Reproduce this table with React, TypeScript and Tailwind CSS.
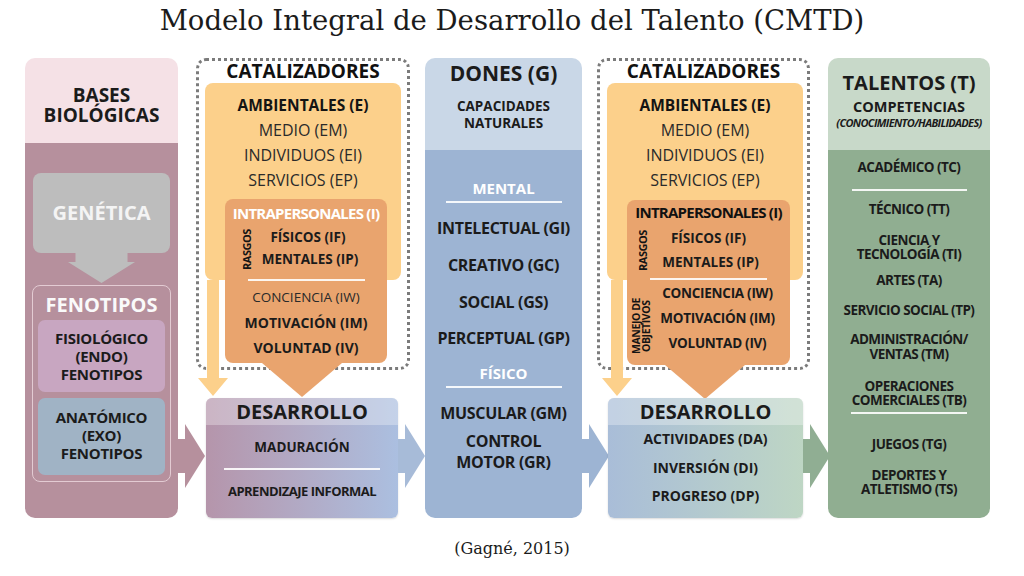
import type { ReactNode } from "react";

// Arrow pointing right, drawn from the edge of one column into the next one.
function SideArrow({ fill, className }: { fill: string; className: string }) {
  return (
    <svg width="27" height="64" viewBox="0 0 27 64" className={className} aria-hidden>
      <polygon points="0,15 7,15 7,0 27,32 7,64 7,49 0,49" fill={fill} />
    </svg>
  );
}

// Thin yellow arrow that leaves the "ambientales" block and drops into DESARROLLO.
function ThinDownArrow({ className }: { className: string }) {
  return (
    <svg width="30" height="116" viewBox="0 0 30 116" className={className} aria-hidden>
      <polygon points="9,0 21,0 21,98 30,98 15,116 0,98 9,98" fill="#fcd08b" />
    </svg>
  );
}

function WideDownHead({ className }: { className: string }) {
  return (
    <svg width="80" height="34" viewBox="0 0 80 34" className={className} aria-hidden>
      <polygon points="0,0 80,0 40,34" fill="#e9a46e" />
    </svg>
  );
}

function Rule({ className }: { className: string }) {
  return <div className={`h-[2px] bg-white/90 ${className}`} />;
}

function SideLabel({ children, className }: { children: ReactNode; className: string }) {
  return (
    <span
      className={`absolute [writing-mode:vertical-rl] rotate-180 text-center font-bold tracking-[-0.04em] text-[#141414] ${className}`}
    >
      {children}
    </span>
  );
}

function Ambientales() {
  return (
    <div className="mt-[2px] h-[197px] w-[196px] rounded-[8px] bg-[#fcd08b] pt-[10px] text-center leading-[25px] text-[#2a2a2a]">
      <div className="text-[15.5px] font-bold text-[#141414]">AMBIENTALES (E)</div>
      <div className="text-[16px]">MEDIO (EM)</div>
      <div className="text-[16px]">INDIVIDUOS (EI)</div>
      <div className="text-[16px]">SERVICIOS (EP)</div>
    </div>
  );
}

function BasesBiologicas() {
  return (
    <div className="relative flex h-[460px] w-[153px] flex-col">
      <div className="h-[85px] rounded-t-[10px] bg-[#f5e1e6] pt-[27px] text-center text-[19px] font-bold leading-[20px] text-[#1b1b1b]">
        BASES
        <br />
        BIOLÓGICAS
      </div>
      <div className="flex-1 rounded-b-[10px] bg-[#b6909d] px-[8px] pt-[30px]">
        <div className="flex h-[80px] items-center justify-center rounded-[8px] bg-[#bdbdbd] text-[20px] font-bold text-[#f4f4f4]">
          GENÉTICA
        </div>
        <svg width="67" height="30" viewBox="0 0 67 30" className="mx-auto block" aria-hidden>
          <polygon points="7.5,0 59.5,0 59.5,9 67,9 33.5,30 0,9 7.5,9" fill="#bdbdbd" />
        </svg>
        <div className="-mx-px mt-[2px] h-[197px] rounded-[8px] border border-[#e3cbd3] px-[5px]">
          <div className="pt-[8px] text-center text-[20px] font-bold leading-[22px] text-[#fafafa]">FENOTIPOS</div>
          <div className="mt-[4px] flex h-[72px] flex-col items-center justify-center rounded-[7px] bg-[#c8a6c1] text-[15px] font-bold leading-[18px] tracking-[-0.02em] text-[#1b1b1b]">
            <span>FISIOLÓGICO</span>
            <span>(ENDO)</span>
            <span>FENOTIPOS</span>
          </div>
          <div className="mt-[6px] flex h-[77px] flex-col items-center justify-center rounded-[7px] bg-[#a0b3c5] pb-[4px] text-[15px] font-bold leading-[18px] tracking-[-0.02em] text-[#1b1b1b]">
            <span>ANATÓMICO</span>
            <span>(EXO)</span>
            <span>FENOTIPOS</span>
          </div>
        </div>
      </div>
      <SideArrow fill="#b6909d" className="absolute left-full top-[366px]" />
    </div>
  );
}

function CatalizadoresIzq() {
  return (
    <div className="relative w-[214px]">
      <div className="h-[312px] rounded-[10px] border-[3px] border-dotted border-[#7b7b7b] px-[6px]">
        <div className="text-center text-[19px] font-bold leading-[20px] text-[#111]">CATALIZADORES</div>
        <Ambientales />
        <div className="relative mt-[-81px] ml-[20px] h-[164px] w-[162px] rounded-[8px] bg-[#e9a46e] pt-[4px] text-center text-[#1b1b1b]">
          <div className="text-[15px] font-bold leading-[20px] tracking-[-0.05em] text-white">INTRAPERSONALES (I)</div>
          <div className="relative mt-[3px] text-[13.5px] font-bold leading-[22px]">
            <SideLabel className="left-[16px] top-[3px] text-[11px] leading-[11px]">RASGOS</SideLabel>
            <div className="pl-[4px]">FÍSICOS (IF)</div>
            <div className="pl-[8px]">MENTALES (IP)</div>
          </div>
          <Rule className="mx-auto mt-[9px] w-[117px]" />
          <div className="mt-[4px] leading-[25px]">
            <div className="text-[13.5px] text-[#2a2a2a]">CONCIENCIA (IW)</div>
            <div className="text-[14px] font-bold">MOTIVACIÓN (IM)</div>
            <div className="text-[14px] font-bold">VOLUNTAD (IV)</div>
          </div>
          <WideDownHead className="absolute left-[37px] top-full" />
        </div>
      </div>
      <ThinDownArrow className="absolute left-[2px] top-[222px]" />
      <div className="relative ml-[10px] mt-[28px] h-[120px] w-[192px] rounded-[6px] bg-linear-to-r from-[#b595ab] to-[#abbfe0] text-center text-[#1b1b1b] shadow-[0_1px_2px_rgba(0,0,0,0.15)]">
        <div className="h-[27px] rounded-t-[6px] bg-white/30 text-[20px] font-bold leading-[27px]">DESARROLLO</div>
        <div className="mt-[13px] text-[13.5px] font-bold leading-[18px]">MADURACIÓN</div>
        <Rule className="mx-auto mt-[12px] w-[156px]" />
        <div className="mt-[12px] text-[13px] font-bold leading-[18px] tracking-[-0.04em]">APRENDIZAJE INFORMAL</div>
        <SideArrow fill="#a7bbd8" className="absolute left-full top-[26px]" />
      </div>
    </div>
  );
}

function Dones() {
  const item = "text-[16px] font-bold leading-[24px] tracking-[-0.02em]";
  return (
    <div className="relative flex h-[460px] w-[157px] flex-col text-center text-[#1b1b1b]">
      <div className="h-[92px] rounded-t-[10px] bg-[#c9d7e7] pt-[3px]">
        <div className="text-[21px] font-bold leading-[24px]">DONES (G)</div>
        <div className="mt-[13px] text-[13.5px] font-bold leading-[17px]">
          CAPACIDADES
          <br />
          NATURALES
        </div>
      </div>
      <div className="flex-1 rounded-b-[10px] bg-[#9db4d3] pt-[28px]">
        <div className="text-[15px] font-bold leading-[20px] text-white">MENTAL</div>
        <Rule className="mx-auto mt-[3px] w-[116px]" />
        <div className={`mt-[13px] ${item}`}>INTELECTUAL (GI)</div>
        <div className={`mt-[13px] ${item}`}>CREATIVO (GC)</div>
        <div className={`mt-[13px] ${item}`}>SOCIAL (GS)</div>
        <div className={`mt-[12px] ${item}`}>PERCEPTUAL (GP)</div>
        <div className="mt-[13px] text-[15px] font-bold leading-[20px] text-white">FÍSICO</div>
        <Rule className="mx-auto mt-[3px] w-[116px]" />
        <div className={`mt-[13px] ${item}`}>MUSCULAR (GM)</div>
        <div className="mt-[6px] text-[16px] font-bold leading-[21px] tracking-[-0.02em]">
          CONTROL
          <br />
          MOTOR (GR)
        </div>
      </div>
      <SideArrow fill="#9db4d3" className="absolute left-full top-[366px]" />
    </div>
  );
}

function CatalizadoresDer() {
  return (
    <div className="relative w-[213px]">
      <div className="h-[312px] rounded-[10px] border-[3px] border-dotted border-[#7b7b7b] px-[7px]">
        <div className="text-center text-[19px] font-bold leading-[20px] text-[#111]">CATALIZADORES</div>
        <Ambientales />
        <div className="relative mt-[-80px] ml-[20px] h-[165px] w-[163px] rounded-[8px] bg-[#e9a46e] pt-[2px] text-center text-[#1b1b1b]">
          <div className="text-[15px] font-bold leading-[20px] tracking-[-0.05em] text-[#111]">INTRAPERSONALES (I)</div>
          <div className="relative mt-[4px] text-[13.5px] font-bold leading-[24px]">
            <SideLabel className="left-[10px] top-[4px] text-[11px] leading-[11px]">RASGOS</SideLabel>
            <div>FÍSICOS (IF)</div>
            <div className="pl-[4px]">MENTALES (IP)</div>
          </div>
          <Rule className="mx-auto mt-[4px] w-[117px]" />
          <div className="relative mt-[1px] pl-[18px] text-[13.5px] font-bold leading-[25px] tracking-[-0.02em]">
            <SideLabel className="left-[5px] top-[15px] text-[10.5px] leading-[9.5px]">MANEJO DE OBJETIVOS</SideLabel>
            <div>CONCIENCIA (IW)</div>
            <div>MOTIVACIÓN (IM)</div>
            <div>VOLUNTAD (IV)</div>
          </div>
          <WideDownHead className="absolute left-[38px] top-full" />
        </div>
      </div>
      <ThinDownArrow className="absolute left-[5px] top-[222px]" />
      <div className="relative ml-[11px] mt-[28px] h-[120px] w-[195px] rounded-[6px] bg-linear-to-r from-[#a9bdd8] to-[#bed6c4] text-center text-[#1b1b1b] shadow-[0_1px_2px_rgba(0,0,0,0.15)]">
        <div className="h-[27px] rounded-t-[6px] bg-white/30 text-[20px] font-bold leading-[27px]">DESARROLLO</div>
        <div className="mt-[3px] text-[14px] font-bold leading-[22px]">ACTIVIDADES (DA)</div>
        <div className="mt-[7px] text-[14px] font-bold leading-[22px]">INVERSIÓN (DI)</div>
        <div className="mt-[6px] text-[14px] font-bold leading-[22px]">PROGRESO (DP)</div>
        <SideArrow fill="#90ae93" className="absolute left-full top-[26px]" />
      </div>
    </div>
  );
}

function Talentos() {
  const item = "text-[13.5px] font-bold leading-[18px] tracking-[-0.04em]";
  const pair = "text-[13.5px] font-bold leading-[14px] tracking-[-0.04em]";
  return (
    <div className="flex h-[460px] w-[162px] flex-col text-center text-[#1b1b1b]">
      <div className="h-[92px] rounded-t-[10px] bg-[#c8d9c9] pt-[13px]">
        <div className="text-[20px] font-bold leading-[24px]">TALENTOS (T)</div>
        <div className="mt-[4px] text-[14.5px] font-bold leading-[16px]">COMPETENCIAS</div>
        <div className="mt-[2px] text-[11px] font-bold italic leading-[12px] tracking-[-0.06em]">(CONOCIMIENTO/HABILIDADES)</div>
      </div>
      <div className="flex-1 rounded-b-[10px] bg-[#90ae91] pt-[8px]">
        <div className={item}>ACADÉMICO (TC)</div>
        <Rule className="mx-auto mt-[13px] w-[115px]" />
        <div className={`mt-[9px] ${item}`}>TÉCNICO (TT)</div>
        <div className={`mt-[15px] ${pair}`}>
          CIENCIA Y
          <br />
          TECNOLOGÍA (TI)
        </div>
        <div className={`mt-[10px] ${item}`}>ARTES (TA)</div>
        <div className={`mt-[12px] ${item}`}>SERVICIO SOCIAL (TP)</div>
        <div className={`mt-[13px] ${pair} leading-[15px]`}>
          ADMINISTRACIÓN/
          <br />
          VENTAS (TM)
        </div>
        <div className={`mt-[17px] ${pair}`}>
          OPERACIONES
          <br />
          COMERCIALES (TB)
        </div>
        <Rule className="mx-auto mt-[5px] w-[116px]" />
        <div className={`mt-[21px] ${item}`}>JUEGOS (TG)</div>
        <div className={`mt-[15px] ${pair}`}>
          DEPORTES Y
          <br />
          ATLETISMO (TS)
        </div>
      </div>
    </div>
  );
}

export default function App() {
  return (
    <div className="h-[576px] w-[1024px] overflow-hidden bg-white font-['Open_Sans',sans-serif]">
      <h1 className="h-[58px] pt-[3px] text-center font-['DejaVu_Serif',serif] text-[27.5px] font-normal leading-[34px] text-[#1b1b1b]">
        Modelo Integral de Desarrollo del Talento (CMTD)
      </h1>
      <div className="flex items-start pl-[25px]">
        <BasesBiologicas />
        <div className="ml-[18px]">
          <CatalizadoresIzq />
        </div>
        <div className="ml-[15px]">
          <Dones />
        </div>
        <div className="ml-[15px]">
          <CatalizadoresDer />
        </div>
        <div className="ml-[18px]">
          <Talentos />
        </div>
      </div>
      <p className="mt-[21px] text-center font-['DejaVu_Serif',serif] text-[16px] leading-[20px] text-[#1b1b1b]">(Gagné, 2015)</p>
    </div>
  );
}
